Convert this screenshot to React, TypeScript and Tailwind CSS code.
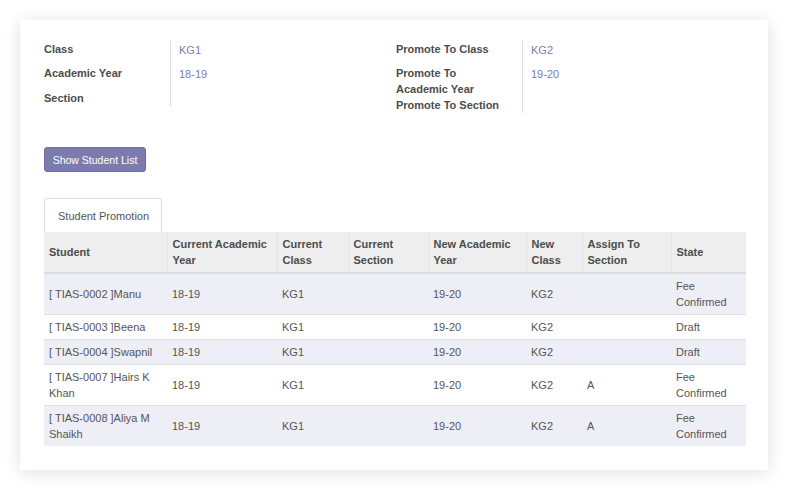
import React from "react";

const font = { fontFamily: '"Liberation Sans", Arial, Helvetica, sans-serif' };

type Row = {
  student: string;
  cay: string;
  cc: string;
  cs: string;
  nay: string;
  nc: string;
  ats: string;
  state: string;
};

const rows: Row[] = [
  { student: "[ TIAS-0002 ]Manu", cay: "18-19", cc: "KG1", cs: "", nay: "19-20", nc: "KG2", ats: "", state: "Fee Confirmed" },
  { student: "[ TIAS-0003 ]Beena", cay: "18-19", cc: "KG1", cs: "", nay: "19-20", nc: "KG2", ats: "", state: "Draft" },
  { student: "[ TIAS-0004 ]Swapnil", cay: "18-19", cc: "KG1", cs: "", nay: "19-20", nc: "KG2", ats: "", state: "Draft" },
  { student: "[ TIAS-0007 ]Hairs K Khan", cay: "18-19", cc: "KG1", cs: "", nay: "19-20", nc: "KG2", ats: "A", state: "Fee Confirmed" },
  { student: "[ TIAS-0008 ]Aliya M Shaikh", cay: "18-19", cc: "KG1", cs: "", nay: "19-20", nc: "KG2", ats: "A", state: "Fee Confirmed" },
];

const headers = [
  { label: "Student", w: "w-[123px]" },
  { label: "Current Academic Year", w: "w-[110px]" },
  { label: "Current Class", w: "w-[71px]" },
  { label: "Current Section", w: "w-[80px]" },
  { label: "New Academic Year", w: "w-[98px]" },
  { label: "New Class", w: "w-[56px]" },
  { label: "Assign To Section", w: "w-[89px]" },
  { label: "State", w: "w-[75px]" },
];

function Field({ label, value, pb }: { label: string; value?: string; pb: string }) {
  return (
    <div className="flex">
      <div className={`w-[127px] shrink-0 border-r border-[#dddddd] pr-[16px] font-bold text-[#4c4c4c] ${pb}`}>
        {label}
      </div>
      <div className={`pl-[8px] pt-[1px] text-[#7c7bad] ${pb}`}>{value}</div>
    </div>
  );
}

export default function App() {
  return (
    <div className="min-h-[491px] w-[788px] bg-white pt-[20px]" style={font}>
      <div className="mx-[20px] h-[450px] w-[748px] bg-white pl-[24px] pr-[22px] pt-[21px] shadow-[0_2px_16px_rgba(0,0,0,0.13)] text-[11px] leading-[16px]">
        <div className="grid grid-cols-2">
          <div className="flex flex-col">
            <Field label="Class" value="KG1" pb="pb-[7px]" />
            <Field label="Academic Year" value="18-19" pb="pb-[8px]" />
            <Field label="Section" pb="pb-0" />
          </div>
          <div className="flex flex-col pl-[1px]">
            <Field label="Promote To Class" value="KG2" pb="pb-[7px]" />
            <Field label="Promote To Academic Year" value="19-20" pb="pb-0" />
            <Field label="Promote To Section" pb="pb-0" />
          </div>
        </div>

        <div className="mt-[34px]">
          <button className="h-[25px] w-[102px] rounded-[3px] border border-[#6f6e9f] bg-[#7c7bad] text-[10.5px] text-white">
            Show Student List
          </button>
        </div>

        <div className="mt-[26px] flex">
          <div className="h-[34px] rounded-t-[3px] border border-b-0 border-[#dddddd] bg-white pl-[13px] pr-[12px] pt-[9px] text-[#555555]">
            Student Promotion
          </div>
        </div>

        <table className="w-[702px] table-fixed border-collapse">
          <thead>
            <tr className="bg-[#eeeeee]">
              {headers.map((h, i) => (
                <th
                  key={h.label}
                  className={`${h.w} border-b-2 border-b-[#dddddd] px-[5px] py-[4px] text-left align-middle font-bold text-[#4c4c4c] ${
                    i > 0 ? "border-l border-l-[#e4e4e4]" : ""
                  }`}
                >
                  {h.label}
                </th>
              ))}
            </tr>
          </thead>
          <tbody>
            {rows.map((r, i) => (
              <tr
                key={r.student}
                className={`${i % 2 === 0 ? "bg-[#eeeef6]" : "bg-white"} ${i > 0 ? "border-t border-[#e0e0e0]" : ""} text-[#555555]`}
              >
                {[r.student, r.cay, r.cc, r.cs, r.nay, r.nc, r.ats, r.state].map((c, j) => (
                  <td key={j} className="px-[5px] py-[4px] align-middle">
                    {c}
                  </td>
                ))}
              </tr>
            ))}
          </tbody>
        </table>
      </div>
    </div>
  );
}
